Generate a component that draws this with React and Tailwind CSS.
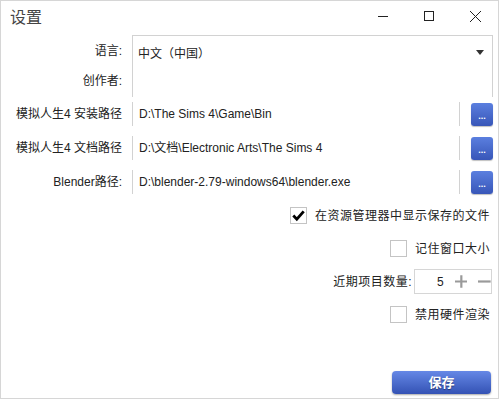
import React from 'react'

const font = { fontFamily: '"Liberation Sans", "Noto Sans CJK SC", sans-serif' }

function TitleBar() {
  return (
    <div className="flex h-[34px] items-center justify-between">
      <span className="ml-[9px] text-[16px] text-[#444]">设置</span>
      <div className="flex items-center">
        {/* minimize */}
        <svg width="46" height="34" viewBox="0 0 46 34">
          <path d="M18 15.5 H28" stroke="#222" strokeWidth="1" />
        </svg>
        {/* maximize */}
        <svg width="46" height="34" viewBox="0 0 46 34">
          <rect x="18.5" y="10.5" width="9" height="9" fill="none" stroke="#222" strokeWidth="1" />
        </svg>
        {/* close */}
        <svg width="46" height="34" viewBox="0 0 46 34">
          <path d="M18 10 L29 21 M29 10 L18 21" stroke="#222" strokeWidth="1" />
        </svg>
      </div>
    </div>
  )
}

function Label({ children }) {
  return <div className="w-[121px] shrink-0 text-right text-[12px] text-[#222]">{children}</div>
}

function BrowseButton() {
  return (
    <div className="ml-[11px] flex h-[23px] w-[22px] shrink-0 items-end justify-center rounded-[3px] bg-gradient-to-b from-[#5b7fdf] to-[#3856b8] pb-[5px] shadow-[0_1px_1px_rgba(0,0,0,0.25)]">
      <span className="text-[9px] font-bold leading-none text-white">...</span>
    </div>
  )
}

function PathRow({ label, value }) {
  return (
    <div className="flex h-[34px] items-center">
      <Label>{label}</Label>
      <div className="ml-[10px] flex h-[24px] flex-1 items-center border-x border-[#d2d2d2] pl-[6px] text-[12px] text-[#222]">
        {value}
      </div>
      <BrowseButton />
    </div>
  )
}

function CheckRow({ checked, label }) {
  return (
    <div className="flex h-[33px] items-center justify-end pr-[8px]">
      <div className="flex h-[17px] w-[17px] items-center justify-center border border-[#c4c4c4] bg-white">
        {checked && (
          <svg width="15" height="15" viewBox="0 0 15 15">
            <path d="M2.3 7.6 L5.8 11.2 L12.7 3.4" fill="none" stroke="#000" strokeWidth="2.8" />
          </svg>
        )}
      </div>
      <span className="ml-[8px] text-[12px] tracking-[0.5px] text-[#222]">{label}</span>
    </div>
  )
}

export default function App() {
  return (
    <div className="flex h-[399px] w-[499px] flex-col border border-[#d6d6d6] bg-white" style={font}>
      <TitleBar />

      {/* language */}
      <div className="flex h-[29px] items-center">
        <Label>
          <span className="relative top-[1px]">语言:</span>
        </Label>
        <div className="ml-[10px] mr-[5px] flex h-full flex-1 items-center justify-between border-x border-t border-[#d2d2d2] pl-[5px] pr-[8px] pt-[8px] text-[12px] text-[#222]">
          <span>中文（中国）</span>
          <svg width="8" height="5" viewBox="0 0 8 5" className="relative top-[-2px]">
            <path d="M0 0 H8 L4 5 Z" fill="#333" />
          </svg>
        </div>
      </div>

      {/* author */}
      <div className="flex h-[33px] items-center">
        <Label>创作者:</Label>
        <div className="ml-[10px] mr-[5px] h-full flex-1 border-x border-[#d2d2d2]" />
      </div>

      <div className="mr-[5px]">
        <PathRow label="模拟人生4 安装路径" value="D:\The Sims 4\Game\Bin" />
        <PathRow label="模拟人生4 文档路径" value="D:\文档\Electronic Arts\The Sims 4" />
        <PathRow label="Blender路径:" value="D:\blender-2.79-windows64\blender.exe" />
      </div>

      <CheckRow checked label="在资源管理器中显示保存的文件" />
      <CheckRow label="记住窗口大小" />

      {/* recent count */}
      <div className="flex h-[33px] items-center justify-end pr-[6px]">
        <span className="mr-[2px] text-[12px] tracking-[0.5px] text-[#222]">近期项目数量:</span>
        <div className="flex h-[25px] w-[78px] items-center border border-[#d6d6d6]">
          <span className="ml-[22px] text-[12px] text-[#222]">5</span>
          <svg width="15" height="15" viewBox="0 0 15 15" className="ml-[11px]">
            <path d="M0 7.5 H15 M7.5 0 V15" stroke="#9a9a9a" strokeWidth="2.6" />
          </svg>
          <svg width="15" height="15" viewBox="0 0 15 15" className="ml-[11px]">
            <path d="M0 7.5 H15" stroke="#9a9a9a" strokeWidth="2.6" />
          </svg>
        </div>
      </div>

      <CheckRow label="禁用硬件渲染" />

      <div className="flex flex-1 items-end justify-end pb-[4px] pr-[7px]">
        <div className="flex h-[23px] w-[99px] items-center justify-center rounded-[4px] bg-gradient-to-b from-[#6688e6] to-[#3452b4] shadow-[0_1px_2px_rgba(0,0,0,0.35)]">
          <span className="text-[13px] font-bold text-white [text-shadow:0_1px_1px_rgba(0,0,0,0.4)]">保存</span>
        </div>
      </div>
    </div>
  )
}
